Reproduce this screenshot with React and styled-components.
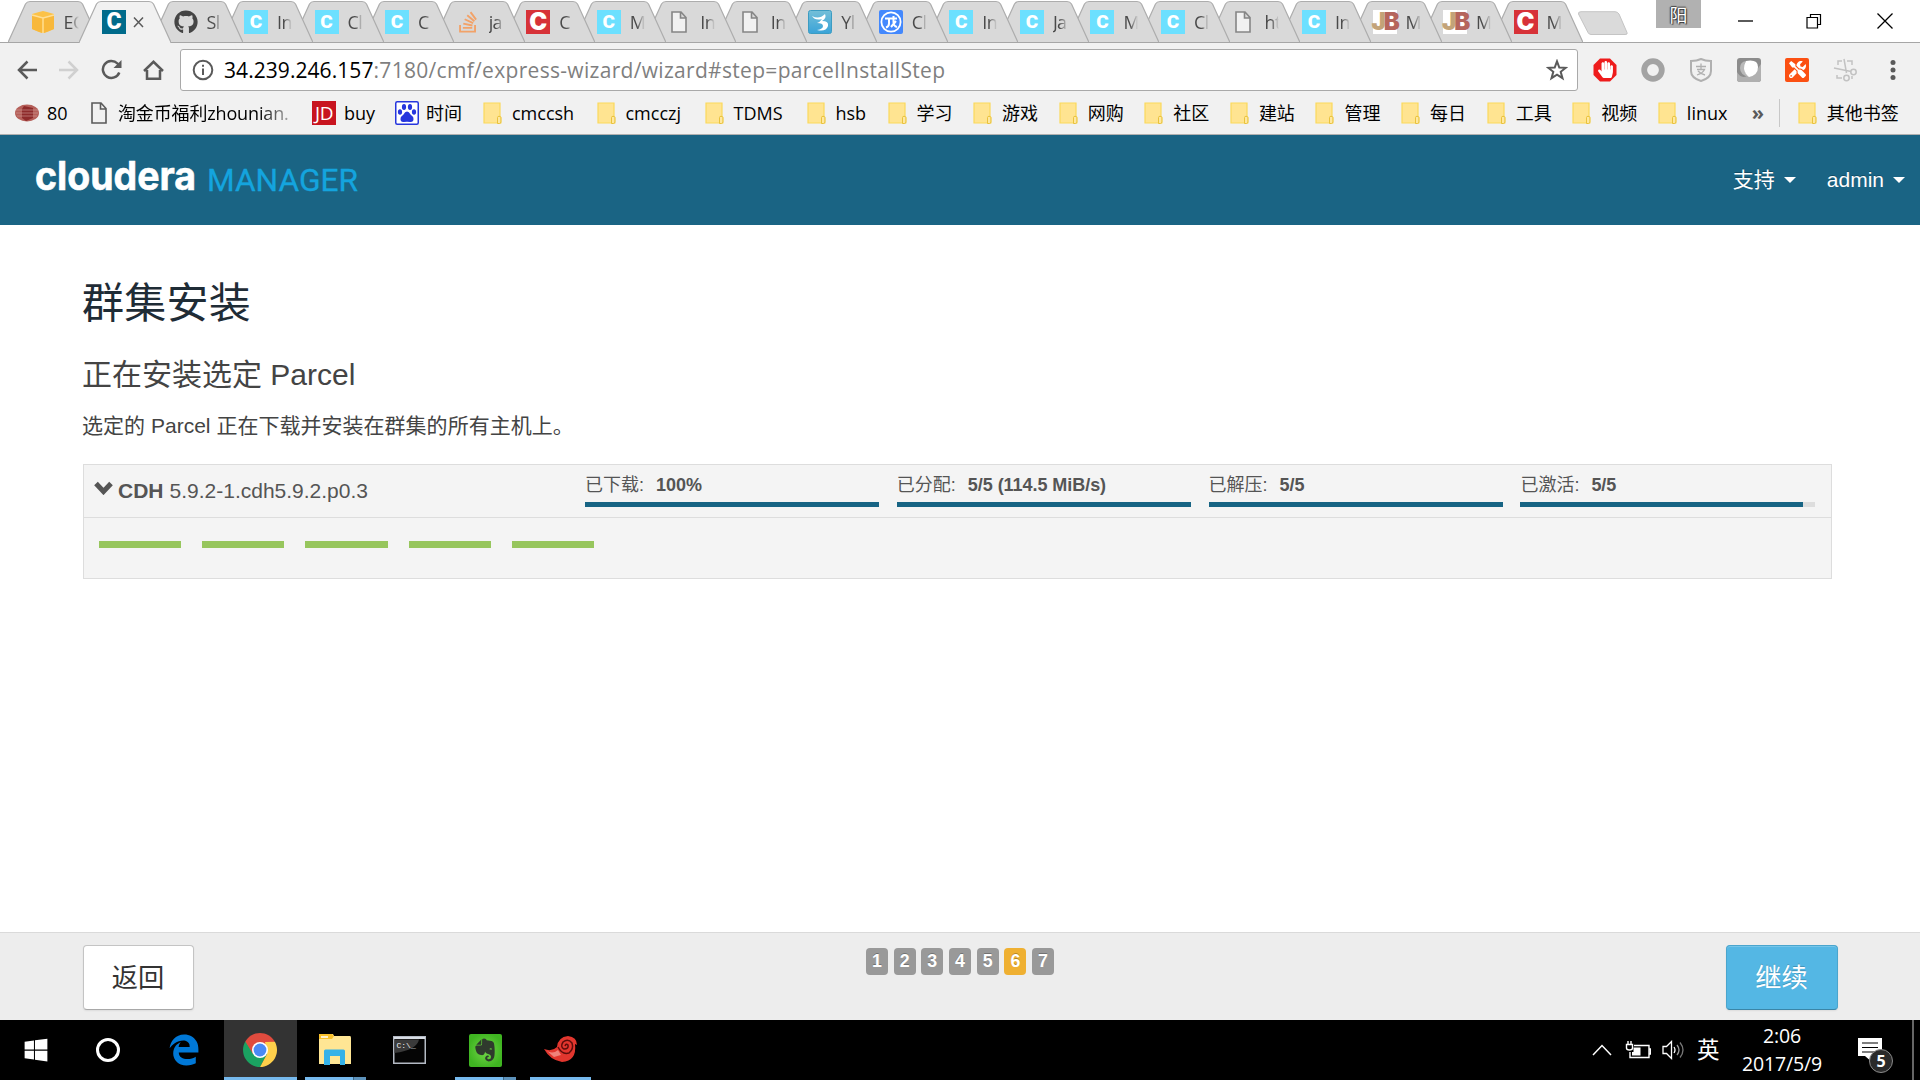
import React from "react";
import styled, { createGlobalStyle, css } from "styled-components";
import { FaGithub, FaStackOverflow, FaWindows, FaEdgeLegacy, FaEvernote, FaHandPaper, FaTools } from "react-icons/fa";
import { SiBaidu } from "react-icons/si";

const ui = `"Open Sans", "Noto Sans", "Noto Sans CJK SC", sans-serif`;
const page = `"Liberation Sans", "Noto Sans CJK SC", sans-serif`;

const Global = createGlobalStyle`
  * { box-sizing: border-box; }
  html, body { margin: 0; padding: 0; overflow: hidden; background: #fff; }
  svg { display: block; flex: none; }
`;

const Screen = styled.div`
  width: 1920px;
  height: 1080px;
  display: flex;
  flex-direction: column;
  overflow: hidden;
  background: #fff;
  font-family: ${page};
`;

/* ---------- tab strip ---------- */
const TabStrip = styled.div`
  height: 43px;
  flex: none;
  display: flex;
  align-items: flex-start;
  padding-left: 7.5px;
  background: linear-gradient(#a6a6a6, #a6a6a6) 0 42px / 100% 1px no-repeat #fff;
`;
const Tabs = styled.div`
  display: flex;
  height: 43px;
  isolation: isolate;
`;
const Tab = styled.div`
  position: relative;
  z-index: ${(p) => p.$z};
  width: 92px;
  margin-right: ${(p) => (p.$wide ? -20.5 : -21.48)}px;
  flex: none;
  height: 43px;
  padding: 10px 0 0 23px;
  display: flex;
  align-items: flex-start;
`;
const TabShape = styled.svg`
  position: absolute;
  left: 0;
  top: 0;
  z-index: -1;
`;
const TabLabel = styled.span`
  width: 15px;
  margin-left: 9px;
  overflow: hidden;
  white-space: nowrap;
  font: 18px/24px ${ui};
  letter-spacing: -0.6px;
  color: #4a4a4a;
  mask-image: linear-gradient(90deg, #000 45%, transparent 100%);
`;
const CloseGlyph = styled.svg`
  margin: 6px 0 0 7px;
`;
const LetterIcon = styled.span`
  width: 24px;
  height: 24px;
  flex: none;
  background: ${(p) => p.$bg};
  color: #fff;
  display: flex;
  align-items: center;
  justify-content: center;
  font: ${(p) => p.$weight || 900} ${(p) => p.$size || 21}px/24px ${(p) => p.$font || "Lato, sans-serif"};
  letter-spacing: ${(p) => p.$ls || 0}px;
`;
const Mono = styled(LetterIcon)`
  background: #fff;
  color: #b5655c;
  letter-spacing: -2px;
  b { color: #c3a378; font-weight: 900; }
`;
const NewTab = styled.svg`
  margin: 11px 0 0 16px;
`;
const WindowButtons = styled.div`
  margin-left: auto;
  padding-right: 3px;
  display: flex;
  align-items: flex-start;
`;
const UserBadge = styled.span`
  width: 45px;
  height: 28px;
  margin-right: 15px;
  background: #b1b1b1;
  color: #fff;
  font: 18px/30px ${ui};
  text-align: center;
  text-shadow: 1px 1px 1px #333, -1px 0 1px #333, 0 -1px 1px #444;
`;
const WindowButton = styled.span`
  width: ${(p) => p.$w || 70}px;
  height: 41px;
  display: flex;
  align-items: center;
  justify-content: center;
`;

/* ---------- toolbar ---------- */
const Toolbar = styled.div`
  height: 53px;
  flex: none;
  display: flex;
  align-items: center;
  background: #f1f1f1;
  padding-left: 15px;
`;
const NavButton = styled.span`
  width: 24px;
  flex: none;
  margin-right: ${(p) => p.$gap || 18}px;
  display: flex;
  justify-content: center;
`;
const Omnibox = styled.div`
  width: 1398px;
  flex: none;
  height: 42px;
  border: 1px solid #a9a9a9;
  border-radius: 3px;
  background: #fff;
  display: flex;
  align-items: center;
  padding: 0 9px 0 11px;
`;
const Url = styled.span`
  margin-left: 10px;
  flex: 1;
  font: 21px/38px ${ui};
  letter-spacing: 0.31px;
  color: #7f7f7f;
  white-space: nowrap;
  b { font-weight: 400; color: #000; letter-spacing: 0.06px; }
`;
const Extensions = styled.div`
  display: flex;
  flex: none;
  margin-left: 15px;
`;
const Extension = styled.span`
  width: 24px;
  height: 24px;
  margin-right: 24px;
  display: flex;
  align-items: center;
  justify-content: center;
  &:last-child { margin-right: 0; }
`;
const OrangeTile = styled(Extension)`
  background: #fb5012;
  border-radius: 2px;
  color: #fff;
`;

/* ---------- bookmarks ---------- */
const Bookmarks = styled.div`
  height: 39px;
  flex: none;
  background: #f1f1f1;
  border-bottom: 1px solid #b0b0b0;
  padding: 0 0 4px 15px;
  display: flex;
  align-items: center;
`;
const Bookmark = styled.div`
  width: ${(p) => p.$w}px;
  flex: none;
  display: flex;
  align-items: center;
`;
const BookmarkText = styled.span`
  margin-left: ${(p) => p.$gap || 8}px;
  font: 18px/24px ${ui};
  color: #000;
  white-space: nowrap;
  ${(p) => p.$fade && css`
    letter-spacing: -0.15px;
    mask-image: linear-gradient(90deg, #000 82%, rgba(0, 0, 0, 0.3) 100%);
  `}
`;
const More = styled.span`
  width: 27px;
  font: 700 20px/20px ${ui};
  color: #5a5a5a;
`;
const Rule = styled.span`
  width: 1px;
  height: 28px;
  margin-right: 18px;
  background: #c8c8c8;
`;

/* ---------- page ---------- */
const Header = styled.header`
  height: 90px;
  flex: none;
  background: #1a6484;
  display: flex;
  align-items: center;
  justify-content: space-between;
  padding: 0 15px 0 30px;
`;
const Menu = styled.nav`
  display: flex;
  gap: 31px;
`;
const MenuItem = styled.span`
  display: flex;
  align-items: center;
  color: #fff;
  font: 21px/30px ${page};
  text-shadow: 0 -1px 0 rgba(0, 0, 0, 0.25);
  &::after {
    content: "";
    margin-left: 9px;
    border: 6px solid transparent;
    border-top-color: #fff;
    border-bottom: 0;
  }
`;
const Main = styled.main`
  flex: 1;
  padding: 52px 88px 0 82px;
  color: #444;
`;
const Title = styled.h1`
  margin: 0;
  font: 400 42px/54px ${page};
  letter-spacing: 0.25px;
  color: #1f2c36;
`;
const Subtitle = styled.h2`
  margin: 24px 0 0;
  font: 400 30px/40px ${page};
`;
const Lead = styled.p`
  margin: 16px 0 0;
  font: 400 21px/30px ${page};
  letter-spacing: 0.02px;
`;
const Panel = styled.section`
  margin: 23px 0 0 1px;
  height: 115px;
  border: 1px solid #ddd;
  background: #f4f4f4;
  color: #555;
`;
const PanelHead = styled.div`
  height: 53px;
  border-bottom: 1px solid #ddd;
  display: flex;
  padding-left: 10px;
`;
const Parcel = styled.div`
  width: 491px;
  display: flex;
  align-items: center;
  font: 21px/30px ${page};
  svg { margin: 0 5px 6px 0; }
  b { margin-right: 6px; }
`;
const Stages = styled.div`
  display: flex;
  gap: 17.5px;
`;
const Stage = styled.div`
  width: 294.3px;
  padding-top: 7px;
`;
const StageText = styled.div`
  font: 18px/26px ${page};
  display: flex;
  height: 26px;
  margin-bottom: 4px;
  b { margin-left: 12px; letter-spacing: -0.05px; }
`;
const Track = styled.div`
  height: 5px;
  background: #ddd;
`;
const Fill = styled.div`
  width: ${(p) => p.$pct}%;
  height: 5px;
  background: #176484;
`;
const Hosts = styled.div`
  display: flex;
  gap: 20.9px;
  padding: 23px 0 0 15px;
`;
const Host = styled.span`
  width: 82.3px;
  height: 7px;
  background: #97c65d;
`;
const Footer = styled.footer`
  height: 88px;
  flex: none;
  border-top: 1px solid #dadada;
  background: #ededed;
  padding: 12px 82px 0 83px;
  display: flex;
  justify-content: space-between;
`;
const Button = styled.button`
  width: ${(p) => (p.$primary ? 112 : 111)}px;
  height: 65px;
  padding: 1px 1px 0 0;
  border-radius: 4px;
  border: 1px solid ${(p) => (p.$primary ? "#4aa5cd" : "#c4c4c4")};
  border-bottom-color: ${(p) => (p.$primary ? "#3a86a8" : "#a8a8a8")};
  background: ${(p) => (p.$primary ? "#54b7e4" : "#fff")};
  color: ${(p) => (p.$primary ? "#fff" : "#333")};
  font: 26.25px/61px ${page};
  box-shadow: ${(p) => (p.$primary ? "inset 0 1px 0 rgba(255,255,255,.2), " : "")}0 1px 2px rgba(0, 0, 0, 0.07);
  text-shadow: ${(p) => (p.$primary ? "0 -1px 0 rgba(0,0,0,.2)" : "none")};
`;
const Pager = styled.div`
  display: flex;
  gap: 5.7px;
  padding-top: 3px;
`;
const PageNo = styled.span`
  width: 22px;
  height: 27px;
  border-radius: 4px;
  background: ${(p) => (p.$on ? "#efb032" : "#999")};
  color: #fff;
  text-align: center;
  font: 700 17.8px/26px ${page};
  text-shadow: 0 -1px 0 rgba(0, 0, 0, 0.25);
`;

/* ---------- taskbar ---------- */
const Taskbar = styled.div`
  height: 60px;
  flex: none;
  background: #000;
  display: flex;
`;
const Task = styled.div`
  width: ${(p) => p.$w}px;
  height: 60px;
  display: flex;
  align-items: center;
  justify-content: center;
  margin-right: ${(p) => p.$mr || 0}px;
  background: ${(p) => (p.$active ? "#333" : "transparent")};
  border-bottom: 3px solid ${(p) => (p.$open ? "#76b9ed" : "transparent")};
  padding-top: 3px;
  padding-right: ${(p) => p.$nudge || 0}px;
  ${(p) => p.$stack && css`
    border-image: linear-gradient(90deg, #76b9ed 78%, #3f6784 78%, #3f6784 80%, #5d92bb 80%) 1;
    border-width: 0 0 3px 0;
    border-style: solid;
  `}
`;
const EvernoteTile = styled.span`
  width: 33px;
  height: 33px;
  border-radius: 2px;
  background: radial-gradient(circle at 50% 50%, #74d64a, #3fb521 75%);
  display: flex;
  align-items: center;
  justify-content: center;
  color: #2f3a2d;
`;
const Tray = styled.div`
  margin-left: auto;
  display: flex;
  align-items: center;
  color: #fff;
`;
const TrayIcon = styled.svg`
  margin-left: ${(p) => p.$gap || 0}px;
`;
const Ime = styled.span`
  margin-left: 11px;
  width: 24px;
  font: 22.5px/60px ${ui};
`;
const Clock = styled.div`
  width: 122px;
  text-align: center;
  font: 19.5px/28px ${ui};
  letter-spacing: -0.15px;
`;
const Notify = styled.div`
  position: relative;
  width: 69px;
  height: 60px;
  padding: 18px 0 0 15px;
`;
const NotifyCount = styled.span`
  position: absolute;
  left: 26px;
  top: 29px;
  width: 24px;
  height: 24px;
  border-radius: 50%;
  border: 1px solid #8a8a8a;
  background: #2a2a2a;
  color: #fff;
  text-align: center;
  font: 700 16px/22px ${ui};
`;
const ShowDesktop = styled.span`
  width: 8px;
  height: 60px;
  border-left: 2px solid #666;
`;

/* ---------- drawings ---------- */
const FileIcon = ({ c = "#858585", w = 24 }) => (
  <svg width={w} height="24" viewBox={w === 24 ? "0 0 24 24" : "4 0 16 24"}>
    <path d="M5 2h9l5 5.500V22H5zM13.500 2v6h5.500" fill="#f1f1f1" stroke={c} strokeWidth="1.600" />
  </svg>
);
const FolderIcon = () => (
  <svg width="19" height="23" viewBox="0 0 19 23">
    <path d="M1 1h16v13.500l.8.8V21H1z" fill="#ffe491" stroke="#fbd95c" strokeWidth="1.200" />
    <path d="M14.500 21.500v-6q0-1.200 1.500-1.200 1.900 0 1.900 1.400v4.300q0 1.500-1.600 1.500z" fill="#ffe89f" stroke="#e9c23c" strokeWidth="1" />
  </svg>
);
const AwsIcon = () => (
  <svg width="24" height="24" viewBox="0 0 24 24">
    <path d="M1 4l7-2 4-1 4 1 7 2v15l-7 3-4 1-4-1-7-3z" fill="#fcc248" />
    <path d="M1 5l10 3v15l-10-4zM23 5l-10 3v15l10-4z" fill="#f8b83b" />
    <path d="M1 5l11 3 11-3M12 8v15" fill="none" stroke="#ffdf97" strokeWidth="1.300" />
  </svg>
);
const BlueThree = () => (
  <svg width="24" height="24" viewBox="0 0 24 24">
    <defs><linearGradient id="b3" x2="0" y2="1"><stop stopColor="#74bfd8" /><stop offset="1" stopColor="#3aa3d8" /></linearGradient></defs>
    <rect x=".5" y=".5" width="23" height="23" rx="2" fill="url(#b3)" stroke="#3c9cc2" />
    <path d="M4 6q7 4 13-2 2 4-3 7 7 0 6 5-2 6-11 4 6-1 6-4t-6-3q3-1 5-4-7 2-10-3z" fill="#fff" />
  </svg>
);
const BlueOval = () => (
  <svg width="24" height="24" viewBox="0 0 24 24">
    <rect width="24" height="24" rx="2" fill="#4388fd" />
    <circle cx="12" cy="12" r="9.600" fill="none" stroke="#fff" strokeWidth="1.800" />
    <path d="M6 8.500h12M10 8.500v5q0 3-3 4M14.500 6v6q0 4 3.500 5M17 11l-5 6" fill="none" stroke="#fff" strokeWidth="2" />
  </svg>
);

const Favicon = ({ type }) => {
  switch (type) {
    case "aws": return <AwsIcon />;
    case "active": return <LetterIcon $bg="#006b8b" $size={23} $font="Roboto, sans-serif">C</LetterIcon>;
    case "github": return <FaGithub size={24} color="#444" />;
    case "so": return <FaStackOverflow size={24} color="#f2a268" />;
    case "red": return <LetterIcon $bg="#d73238" $size={24} $font="Inter, sans-serif">C</LetterIcon>;
    case "file": return <FileIcon />;
    case "three": return <BlueThree />;
    case "oval": return <BlueOval />;
    case "jb": return <Mono $size={24} $font="Inter, sans-serif"><b>J</b>B</Mono>;
    default: return <LetterIcon $bg="#6ce0ff" $size={19} $font="Roboto, sans-serif">C</LetterIcon>;
  }
};

const tabs = [
  ["aws", "EC"], ["active", ""], ["github", "Sl"], ["c", "In"], ["c", "Cl"], ["c", "C"], ["so", "ja"],
  ["red", "C"], ["c", "M"], ["file", "In"], ["file", "In"], ["three", "Yl"], ["oval", "Cl"], ["c", "In"],
  ["c", "Ja"], ["c", "M"], ["c", "Cl"], ["file", "ht"], ["c", "In"], ["jb", "M"], ["jb", "M"], ["red", "M"],
];

const bookmarks = [
  ["cmccsh", 113.5], ["cmcczj", 108], ["TDMS", 102], ["hsb", 81], ["学习", 85.6], ["游戏", 85.6], ["网购", 85.6],
  ["社区", 85.6], ["建站", 85.6], ["管理", 85.6], ["每日", 85.6], ["工具", 85.6], ["视频", 85.6], ["linux", 94],
];

const stages = [
  ["已下载:", "100%", 100], ["已分配:", "5/5 (114.5 MiB/s)", 100], ["已解压:", "5/5", 100], ["已激活:", "5/5", 96],
];

const line = { fill: "none", stroke: "#5a5a5a", strokeWidth: 2.5 };

export default function App() {
  return (
    <Screen>
      <Global />
      <TabStrip>
        <Tabs>
          {tabs.map(([type, label], i) => {
            const on = type === "active";
            return (
              <Tab key={i} $z={on ? 50 : 40 - i} $wide={i < 2}>
                <TabShape width="92" height="43">
                  <path
                    d="M0 42.500L17.500 4Q19 1.500 22 1.500H70Q73 1.500 74.500 4L92 42.500"
                    fill={on ? "#f1f1f1" : "#d9d9d9"} stroke="#adadad" strokeWidth="1.200"
                  />
                  {on ? <path d="M1 42.500H91" stroke="#f1f1f1" strokeWidth="1.500" /> : <path d="M0 42.500H92" stroke="#a6a6a6" />}
                </TabShape>
                <Favicon type={type} />
                {on ? (
                  <CloseGlyph width="11" height="12"><path d="M1 1.500l9 9.500M10 1.500l-9 9.500" stroke="#5a5a5a" strokeWidth="1.500" /></CloseGlyph>
                ) : (
                  <TabLabel>{label}</TabLabel>
                )}
              </Tab>
            );
          })}
        </Tabs>
        <NewTab width="54" height="26">
          <path d="M4 .7H38Q40.500 .7 42 3L50 21.500Q51 23.500 48 23.500H14Q12 23.500 11 21.500L1.500 3Q1 .7 4 .7z" fill="#dadada" stroke="#c4c4c4" />
        </NewTab>
        <WindowButtons>
          <UserBadge>阳</UserBadge>
          <WindowButton $w={58}><svg width="15" height="2"><path d="M0 1H15" stroke="#000" strokeWidth="1.300" /></svg></WindowButton>
          <WindowButton $w={79}>
            <svg width="16" height="16" fill="none" stroke="#000" strokeWidth="1.200"><path d="M1 4.500H11.500V15H1zM4.500 4.500V1.500H14.500V11.500H11.500" /></svg>
          </WindowButton>
          <WindowButton $w={64}>
            <svg width="16" height="16"><path d="M.5 .5l15 15M15.500 .5l-15 15" stroke="#000" strokeWidth="1.300" /></svg>
          </WindowButton>
        </WindowButtons>
      </TabStrip>

      <Toolbar>
        <NavButton><svg width="20" height="20" {...line}><path d="M20 10H2M10.500 1.500L2 10l8.500 8.500" /></svg></NavButton>
        <NavButton><svg width="20" height="20" {...line} stroke="#d0d0d0"><path d="M0 10H18M9.500 1.500L18 10l-8.500 8.500" /></svg></NavButton>
        <NavButton>
          <svg width="21" height="21" {...line}><path d="M18.300 13.500A8.500 8.500 0 1 1 16.500 4.500L19 7" /><path d="M20.500 1v8h-8z" fill="#5a5a5a" stroke="none" /></svg>
        </NavButton>
        <NavButton $gap={15}>
          <svg width="21" height="20" {...line}><path d="M1 11L10.500 1.800 20 11M4 10v8.700h13V10" /></svg>
        </NavButton>
        <Omnibox>
          <svg width="22" height="22" {...line} strokeWidth="2"><circle cx="11" cy="11" r="9.300" /><path d="M11 9.500v6.500M11 5.800v2" /></svg>
          <Url><b>34.239.246.157</b>:7180/cmf/express-wizard/wizard#step=parcelInstallStep</Url>
          <svg width="22" height="22" viewBox="0 0 22 22" {...line} strokeWidth="2">
            <path d="M11 2.300l2.300 6.200 6.500.3-5.100 4 1.800 6.400L11 15.600l-5.500 3.600 1.800-6.400-5.100-4 6.500-.3z" />
          </svg>
        </Omnibox>
        <Extensions>
          <Extension>
            <svg width="24" height="24">
              <path d="M7 .5h10L23.500 7v10L17 23.500H7L.5 17V7z" fill="#ee1c1c" />
              <FaHandPaper x="4" y="3" size={17} color="#fff" />
            </svg>
          </Extension>
          <Extension><svg width="24" height="24"><circle cx="12" cy="12" r="8.800" fill="none" stroke="#a3a3a3" strokeWidth="5.800" /></svg></Extension>
          <Extension>
            <svg width="22" height="24" fill="none" stroke="#b0b0b0">
              <path d="M11 1Q15 3 21 3V13Q21 20 11 23 1 20 1 13V3Q7 3 11 1z" strokeWidth="2" />
              <path d="M6 8.500h10M11 5.500v5.500M7 11.500h7.500Q13 15 7 17M8 13q3 3 7 4" strokeWidth="1.300" />
            </svg>
          </Extension>
          <Extension>
            <svg width="24" height="24">
              <rect width="24" height="24" rx="3" fill="#8c8c8c" />
              <path d="M0 14Q4 21 10 18 18 16 24 6V21Q24 24 21 24H3Q0 24 0 21z" fill="#b0b0b0" />
              <path d="M3 10Q3 4 9 3 6 7 8 13 9 17 12 19 3 17 3 10z" fill="#b9b9b9" />
              <path d="M9 3Q21 1 21 9 21 17 12 19 8 16 7 11 7 6 9 3z" fill="#fff" />
            </svg>
          </Extension>
          <OrangeTile><FaTools size={17} /></OrangeTile>
          <Extension>
            <svg width="24" height="24" fill="none" stroke="#c2c2c2" strokeWidth="1.500">
              <path d="M5 7V3h4M14 3h5v4M19 18v3M4 17v3h5M11 1l2.500 14M1 10l17 3.500" />
              <circle cx="13.500" cy="20" r="2.700" /><circle cx="20.500" cy="14" r="2.700" />
            </svg>
          </Extension>
          <Extension><svg width="6" height="22" fill="#5a5a5a"><circle cx="3" cy="3.500" r="2.500" /><circle cx="3" cy="11" r="2.500" /><circle cx="3" cy="18.500" r="2.500" /></svg></Extension>
        </Extensions>
      </Toolbar>

      <Bookmarks>
        <Bookmark $w={76}>
          <svg width="24" height="18">
            <ellipse cx="12" cy="9" rx="12" ry="8.500" fill="#b5605a" />
            <path d="M9 2l9 2v10l-7 3-4-3V5z" fill="#8e2b2b" />
            <path d="M1 6h22M1 9h22M2 12h20" stroke="#d19c96" strokeWidth="1" opacity=".6" />
          </svg>
          <BookmarkText>80</BookmarkText>
        </Bookmark>
        <Bookmark $w={221}><FileIcon w={16} c="#5a5a5a" /><BookmarkText $gap={11} $fade>淘金币福利zhounian.</BookmarkText></Bookmark>
        <Bookmark $w={83}>
          <LetterIcon $bg="#c8141f" $size={19} $weight={400} $ls={-0.5} $font="'Open Sans', sans-serif">JD</LetterIcon>
          <BookmarkText>buy</BookmarkText>
        </Bookmark>
        <Bookmark $w={88}>
          <svg width="24" height="24"><rect x=".75" y=".75" width="22.500" height="22.500" rx="1.500" fill="#fff" stroke="#2636dd" strokeWidth="1.500" />
            <g fill="#2636dd">
              <ellipse cx="5" cy="11" rx="2.100" ry="2.800" /><ellipse cx="9" cy="6" rx="2.100" ry="3" />
              <ellipse cx="15" cy="6" rx="2.100" ry="3" /><ellipse cx="19" cy="11" rx="2.100" ry="2.800" />
              <path d="M12 10.500q2 0 3.500 3 3 2 3 4.500 0 3.500-3.500 3-3-.7-6 0-3.500.5-3.500-3 0-2.500 3-4.500 1.500-3 3.500-3z" />
            </g>
          </svg>
          <BookmarkText $gap={7}>时间</BookmarkText>
        </Bookmark>
        {bookmarks.map(([t, w]) => (
          <Bookmark key={t} $w={w}><FolderIcon /><BookmarkText $gap={10}>{t}</BookmarkText></Bookmark>
        ))}
        <More>»</More>
        <Rule />
        <Bookmark $w={110}><FolderIcon /><BookmarkText $gap={10}>其他书签</BookmarkText></Bookmark>
      </Bookmarks>

      <Header>
        <svg width="340" height="50">
          <text x="5" y="35" fill="#fff" stroke="#fff" strokeWidth=".6" fontFamily="Inter, sans-serif" fontWeight="700" fontSize="39.500" textLength="161" lengthAdjust="spacingAndGlyphs">cloudera</text>
          <text x="177" y="35.500" fill="#14a4de" stroke="#14a4de" strokeWidth=".3" fontFamily="Roboto, sans-serif" fontSize="32" textLength="151" lengthAdjust="spacingAndGlyphs">MANAGER</text>
        </svg>
        <Menu><MenuItem>支持</MenuItem><MenuItem>admin</MenuItem></Menu>
      </Header>

      <Main>
        <Title>群集安装</Title>
        <Subtitle>正在安装选定 Parcel</Subtitle>
        <Lead>选定的 Parcel 正在下载并安装在群集的所有主机上。</Lead>
        <Panel>
          <PanelHead>
            <Parcel>
              <svg width="19" height="14"><path d="M2 2.500l7.500 8 7.500-8" fill="none" stroke="#555" strokeWidth="5" /></svg>
              <b>CDH</b>5.9.2-1.cdh5.9.2.p0.3
            </Parcel>
            <Stages>
              {stages.map(([label, value, pct]) => (
                <Stage key={label}>
                  <StageText>{label}<b>{value}</b></StageText>
                  <Track><Fill $pct={pct} /></Track>
                </Stage>
              ))}
            </Stages>
          </PanelHead>
          <Hosts>{[1, 2, 3, 4, 5].map((n) => <Host key={n} />)}</Hosts>
        </Panel>
      </Main>

      <Footer>
        <Button>返回</Button>
        <Pager>{[1, 2, 3, 4, 5, 6, 7].map((n) => <PageNo key={n} $on={n === 6}>{n}</PageNo>)}</Pager>
        <Button $primary>继续</Button>
      </Footer>

      <Taskbar>
        <Task $w={72}><FaWindows size={26} color="#fff" /></Task>
        <Task $w={72}><svg width="26" height="26"><circle cx="13" cy="13" r="10.500" fill="none" stroke="#fff" strokeWidth="3" /></svg></Task>
        <Task $w={80}><FaEdgeLegacy size={32} color="#0078d7" /></Task>
        <Task $w={73} $mr={8} $nudge={2} $active $open>
          <svg width="34" height="34" viewBox="-17 -17 34 34">
            <path d="M-14.700 -8.500A17 17 0 0 1 14.700 -8.500L0 0z" fill="#df4b3e" />
            <path d="M-14.700 -8.500A17 17 0 0 0 0 17L7 4 0 0z" fill="#1ba261" />
            <path d="M14.900 -8.200A17 17 0 0 1 0 17L7 4 5 -8z" fill="#ffd04b" />
            <path d="M-14.700 -8.500L-7 4 0 -8H15z" fill="#df4b3e" />
            <circle r="8" fill="#fff" /><circle r="6.400" fill="#4a8af4" />
          </svg>
        </Task>
        <Task $w={61} $mr={13} $nudge={2} $open $stack>
          <svg width="32" height="32">
            <path d="M0 2Q0 0 1 0H14L15 2H31Q32 2 32 4V30H0z" fill="#ffe694" />
            <path d="M0 0H13L15 2 13 5H0z" fill="#f9c12a" /><path d="M2 3H9" stroke="#fff" strokeWidth="1.500" />
            <path d="M5 31V17Q5 15.500 6.500 15.500H24.500Q26 15.500 26 17V31H21V22H11V31z" fill="#35b2e8" />
          </svg>
        </Task>
        <Task $w={61} $mr={15}>
          <svg width="33" height="28">
            <rect x=".75" y=".75" width="31.500" height="26.500" fill="#050505" stroke="#b4bac4" strokeWidth="1.500" />
            <path d="M1.500 3.500H26Q24 14 1.500 17z" fill="#3a3a3a" /><path d="M1 2H32" stroke="#d7dce4" strokeWidth="2" />
            <text x="3.500" y="11.500" fill="#eee" fontFamily="Liberation Mono, monospace" fontSize="8">C:\_</text>
          </svg>
        </Task>
        <Task $w={61} $mr={14} $nudge={1} $open $stack><EvernoteTile><FaEvernote size={26} /></EvernoteTile></Task>
        <Task $w={61} $open>
          <svg width="34" height="30" viewBox="0 0 34 30">
            <path d="M0 14Q8 17 13 12 14 2 24 1 33 2 33 10L31 9Q33 26 18 27 6 25 0 14z" fill="#e2362e" />
            <path d="M14 12Q18 20 25 18 30 14 28 8 24 3 19 7 16 12 20 14 25 14 24 10 22 8 21 11" fill="none" stroke="#5d0d0b" strokeWidth="1.500" />
            <path d="M2 15Q8 20 14 15L17 20 10 22z" fill="#f6a39b" opacity=".7" />
          </svg>
        </Task>
        <Tray>
          <TrayIcon width="20" height="12" fill="none" stroke="#fff" strokeWidth="1.500"><path d="M1 11L10 1.500 19 11" /></TrayIcon>
          <TrayIcon $gap={13} width="26" height="20" fill="none" stroke="#fff" strokeWidth="1.400">
            <path d="M9 5.500H24V17.500H5V12M24 9h1.500v5H24" /><path d="M1.500 4.500H7.500V8Q7.500 10 4.500 10T1.500 8zM3 1v3M6 1v3" /><path d="M8.500 7.500H15.500V15.500H7V12H8.500z" fill="#fff" stroke="none" />
          </TrayIcon>
          <TrayIcon $gap={11} width="24" height="20" fill="none" stroke="#fff" strokeWidth="1.300">
            <path d="M1 6.500H4.500L9.500 1.500V18.500L4.500 13.500H1zM12 7q2 3 0 6" /><path d="M15 5q4 5 0 10" stroke="#999" /><path d="M18 2.500q6 7.500 0 15" stroke="#777" />
          </TrayIcon>
          <Ime>英</Ime>
          <Clock>2:06<br />2017/5/9</Clock>
          <Notify>
            <svg width="24" height="26"><path d="M0 0H24V18H15V25L7 18H0z" fill="#fff" /><path d="M4 5H20M4 9.500H20M4 14H20" stroke="#000" strokeWidth="1.200" /></svg>
            <NotifyCount>5</NotifyCount>
          </Notify>
          <ShowDesktop />
        </Tray>
      </Taskbar>
    </Screen>
  );
}
